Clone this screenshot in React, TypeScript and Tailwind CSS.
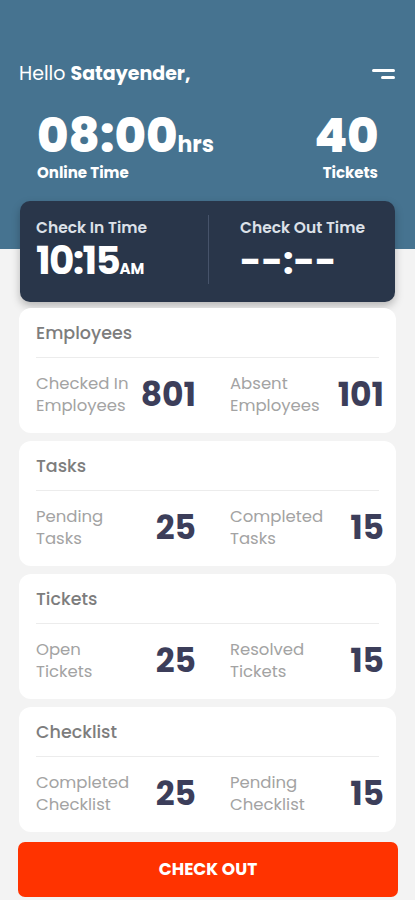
function App() {
  const stats = [
    {
      title: 'Employees',
      items: [
        ['Checked In', 'Employees', '801'],
        ['Absent', 'Employees', '101'],
      ],
    },
    {
      title: 'Tasks',
      items: [
        ['Pending', 'Tasks', '25'],
        ['Completed', 'Tasks', '15'],
      ],
    },
    {
      title: 'Tickets',
      items: [
        ['Open', 'Tickets', '25'],
        ['Resolved', 'Tickets', '15'],
      ],
    },
    {
      title: 'Checklist',
      items: [
        ['Completed', 'Checklist', '25'],
        ['Pending', 'Checklist', '15'],
      ],
    },
  ]

  return (
    <main className="min-h-screen bg-[linear-gradient(to_bottom,#467390_249px,#f3f3f3_249px)] font-['Poppins','Inter',sans-serif] pb-1">
      <header className="px-[19px] pt-[60px]">
        <div className="flex items-center justify-between">
          <p className="text-[19px] leading-[28px] text-white">
            Hello <span className="font-bold">Satayender,</span>
          </p>
          <div className="flex flex-col items-end gap-[4px] pr-[1px]">
            <span className="h-[3px] w-[23px] rounded-full bg-white" />
            <span className="h-[3px] w-[14px] rounded-full bg-white" />
          </div>
        </div>

        <div className="mt-[24px] flex items-start justify-between px-[18px]">
          <div>
            <p className="flex items-baseline text-white">
              <span className="text-[48px] font-extrabold leading-[48px]">08:00</span>
              <span className="text-[22px] font-bold leading-[22px]">hrs</span>
            </p>
            <p className="mt-[3px] text-[15px] font-bold leading-[20px] text-white">
              Online Time
            </p>
          </div>
          <div className="text-right">
            <p className="text-[48px] font-extrabold leading-[48px] tracking-[-0.01em] text-white">
              40
            </p>
            <p className="mt-[3px] text-[15px] font-bold leading-[20px] text-white">
              Tickets
            </p>
          </div>
        </div>
      </header>

      <div className="mx-[20px] mt-[18px] flex items-start rounded-[10px] bg-[#29364a] px-[16px] pb-[21px] pt-[17px] shadow-[0_4px_8px_rgba(0,0,0,0.25)]">
        <div className="w-[172px]">
          <p className="text-[15.5px] font-semibold leading-[20px] text-[#dce1e8]">
            Check In Time
          </p>
          <p className="mt-[3px] flex items-baseline text-white">
            <span className="text-[39px] font-bold leading-[40px] tracking-[-0.04em]">10:15</span>
            <span className="text-[15px] font-bold leading-[15px]">AM</span>
          </p>
        </div>
        <div className="-my-[3px] w-px self-stretch bg-[#46536a]" />
        <div className="flex-1 pl-[31px]">
          <p className="text-[15.5px] font-semibold leading-[20px] text-[#dce1e8]">
            Check Out Time
          </p>
          <p className="mt-[3px] text-[37px] font-bold leading-[40px] text-white">
            --:--
          </p>
        </div>
      </div>

      <div className="mt-[6px] flex flex-col gap-[8px] px-[19px]">
        {stats.map((card) => (
          <section
            key={card.title}
            className="rounded-[12px] bg-white pb-[16px] pl-[17px] pr-[13px] pt-[13px]"
          >
            <h2 className="text-[17.5px] font-medium leading-[24px] text-[#7d7d7d]">
              {card.title}
            </h2>
            <div className="mr-[4px] mt-[12px] h-px bg-[#ececec]" />
            <div className="mt-[15px] grid grid-cols-[160px_154px] gap-x-[34px]">
              {card.items.map(([a, b, n]) => (
                <div key={a + b} className="flex items-center justify-between">
                  <p className="text-[16.5px] leading-[22px] text-[#a3a3a3]">
                    {a}
                    <br />
                    {b}
                  </p>
                  <p className="text-[33px] font-bold leading-[36px] text-[#3c3e5a]">
                    {n}
                  </p>
                </div>
              ))}
            </div>
          </section>
        ))}
      </div>

      <button className="mx-[18px] mt-[10px] flex h-[55px] w-[380px] items-center justify-center rounded-[7px] bg-[#ff3300] text-[17px] font-bold text-white">
        CHECK OUT
      </button>
    </main>
  )
}

export default App
